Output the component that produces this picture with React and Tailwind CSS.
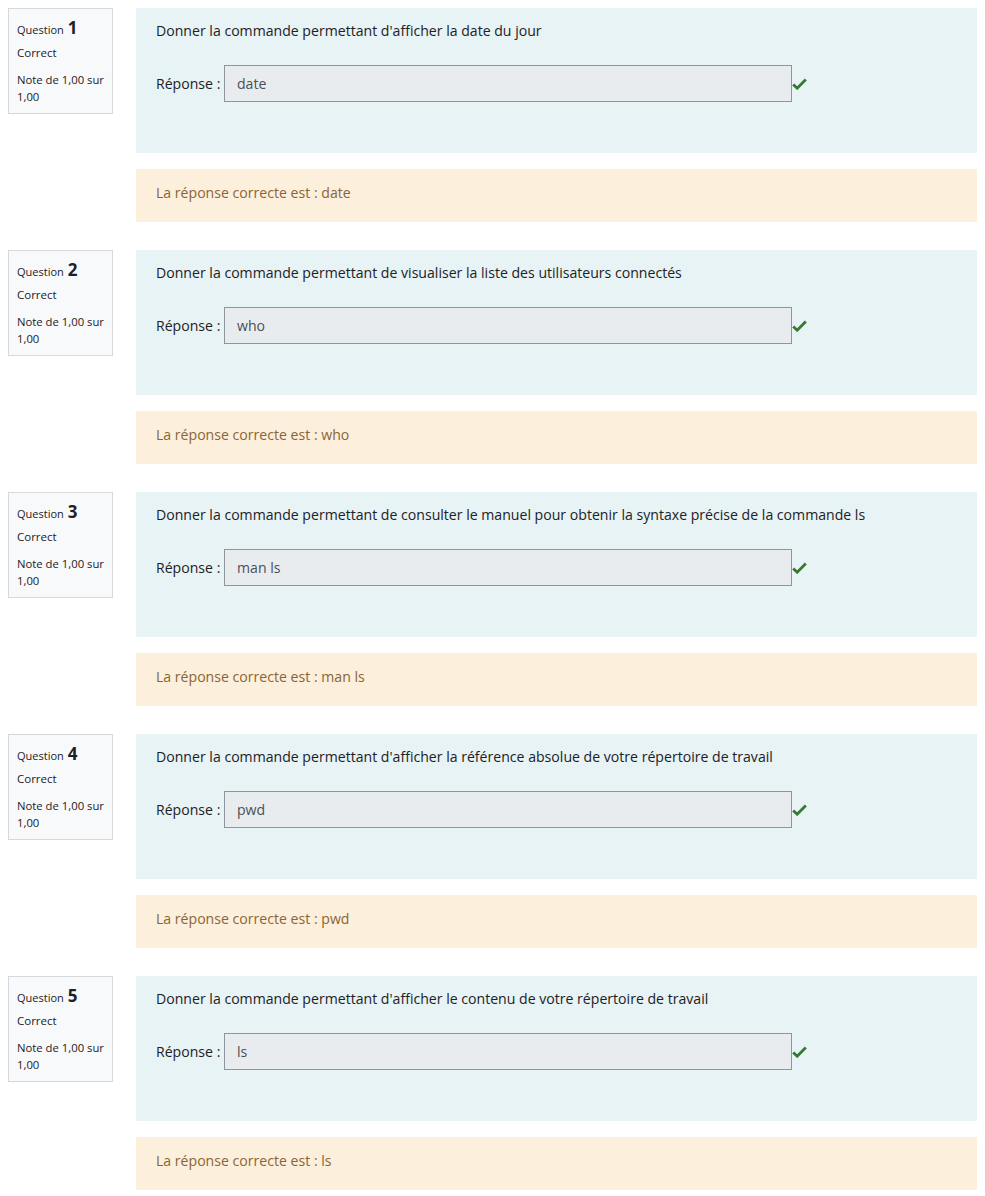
import React from 'react';

const questions = [
  { n: 1, text: "Donner la commande permettant d'afficher la date du jour", answer: 'date' },
  { n: 2, text: 'Donner la commande permettant de visualiser la liste des utilisateurs connectés', answer: 'who' },
  { n: 3, text: 'Donner la commande permettant de consulter le manuel pour obtenir la syntaxe précise de la commande ls', answer: 'man ls' },
  { n: 4, text: "Donner la commande permettant d'afficher la référence absolue de votre répertoire de travail", answer: 'pwd' },
  { n: 5, text: "Donner la commande permettant d'afficher le contenu de votre répertoire de travail", answer: 'ls' },
];

const CheckIcon = () => (
  <svg width="15" height="12" viewBox="0 0 15 12" className="shrink-0">
    <path d="M1.2 6.4 L5.2 10.2 L13.8 1.6" fill="none" stroke="#357a32" strokeWidth="2.8" strokeLinejoin="miter" />
  </svg>
);

const Question = ({ q }) => (
  <div className="flex mb-[28px]">
    {/* info block */}
    <div className="w-[105px] h-[106px] shrink-0 ml-[8px] border border-[#d5d9dd] bg-[#f8f9fa] pl-[8px] pr-[4px] pt-[6px] text-[#1d2125]">
      <div className="flex items-baseline gap-[4px] h-[24px]">
        <span className="text-[11px]">Question</span>
        <span className="text-[17px] font-bold">{q.n}</span>
      </div>
      <div className="text-[11.5px] mt-[5px] leading-[18px]">Correct</div>
      <div className="text-[11.3px] mt-[9px] leading-[17px]">Note de 1,00 sur 1,00</div>
    </div>

    {/* content */}
    <div className="flex-1 ml-[23px] mr-[8px]">
      <div className="h-[145px] bg-[#e7f3f5] px-[20px] pt-[12px] text-[#1d2125]">
        <div className="text-[14.1px] leading-[22px]">{q.text}</div>
        <div className="flex items-center mt-[23px]">
          <span className="w-[68px] shrink-0 text-[14.1px]">Réponse :</span>
          <div className="w-[568px] h-[37px] border border-[#8f959e] bg-[#e9ecef] px-[12px] flex items-center text-[14.1px] text-[#495057]">
            {q.answer}
          </div>
          <span className="ml-[0px]"><CheckIcon /></span>
        </div>
      </div>
      <div className="h-[53px] mt-[16px] bg-[#fcefdc] px-[20px] pb-[6px] flex items-center text-[14.1px] text-[#8a6535]">
        La réponse correcte est : {q.answer}
      </div>
    </div>
  </div>
);

export default function App() {
  return (
    <div className="w-[985px] bg-white pt-[8px] font-['Open_Sans',sans-serif]">
      {questions.map((q) => (
        <Question key={q.n} q={q} />
      ))}
    </div>
  );
}
